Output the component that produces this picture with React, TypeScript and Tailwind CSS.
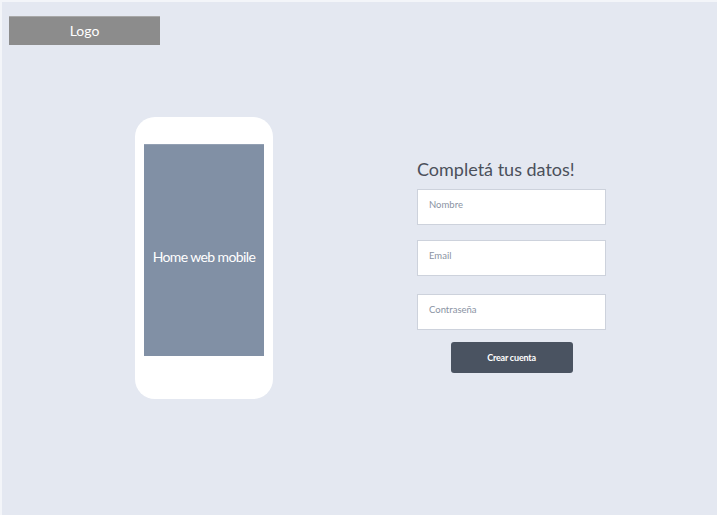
const fields = [
  { label: "Nombre", mt: "mt-2" },
  { label: "Email", mt: "mt-[15px]" },
  { label: "Contraseña", mt: "mt-[18px]" },
];

const App = () => {
  return (
    <div className="h-[517px] w-[717px] bg-white font-['Lato',sans-serif]">
      <div className="h-[515px] w-[717px] border-l-2 border-t-2 border-[#f3f5f9] bg-[#e4e8f1]">
        <header className="pl-[7px] pt-[14px]">
          <div className="flex h-[29px] w-[151px] items-center justify-center border-t border-[#a8a8a8] bg-[#8c8c8c] pb-[2px] text-[14px] text-white">
            Logo
          </div>
        </header>

        <main className="flex">
          <div className="ml-[133px] mt-[72px] flex h-[282px] w-[138px] flex-col items-center rounded-[20px] bg-white pt-[27px]">
            <div className="flex h-[212px] w-[120px] items-center justify-center border-t border-[#93a0b3] bg-[#8190a5] pt-[12px] text-[14px] tracking-[-0.6px] text-white">
              Home web mobile
            </div>
          </div>

          <section className="ml-[144px] mt-[112px] flex w-[189px] flex-col">
            <h1 className="text-[18px] leading-[24px] text-[#4b505b]">Completá tus datos!</h1>
            {fields.map((f) => (
              <div
                key={f.label}
                className={`${f.mt} h-[36px] w-[189px] border border-[#cdd2dc] bg-white px-[11px] pt-[8px] text-[9.5px] leading-[14px] text-[#8a93a3]`}
              >
                {f.label}
              </div>
            ))}
            <button className="mx-auto mt-[12px] flex h-[31px] w-[122px] items-center justify-center rounded-[3px] bg-[#4a5361] text-[9px] font-bold tracking-[-0.2px] text-white">
              Crear cuenta
            </button>
          </section>
        </main>
      </div>
    </div>
  );
};

export default App;
